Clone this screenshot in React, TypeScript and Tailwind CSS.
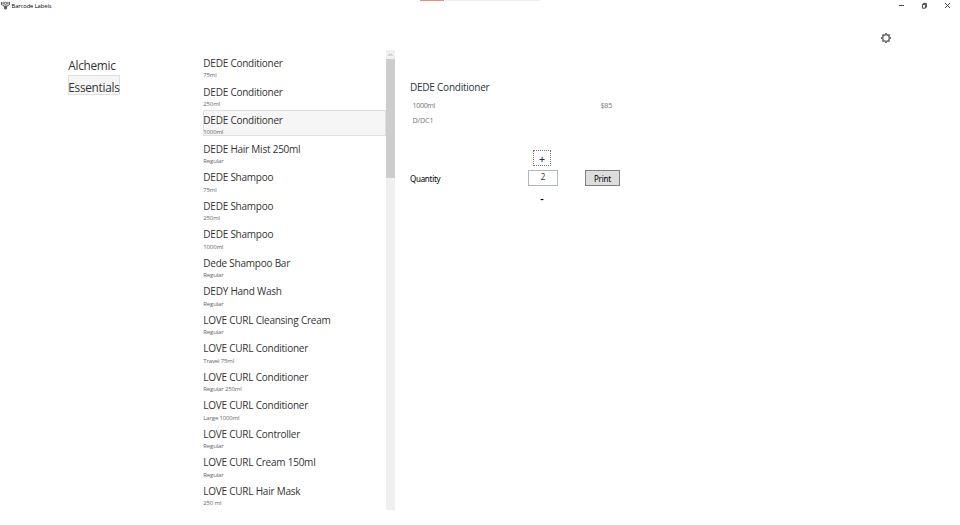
import { useState } from "react";

type Product = { name: string; variant: string };

const brands = ["Alchemic", "Essentials"];

const products: Product[] = [
  { name: "DEDE Conditioner", variant: "75ml" },
  { name: "DEDE Conditioner", variant: "250ml" },
  { name: "DEDE Conditioner", variant: "1000ml" },
  { name: "DEDE Hair Mist 250ml", variant: "Regular" },
  { name: "DEDE Shampoo", variant: "75ml" },
  { name: "DEDE Shampoo", variant: "250ml" },
  { name: "DEDE Shampoo", variant: "1000ml" },
  { name: "Dede Shampoo Bar", variant: "Regular" },
  { name: "DEDY Hand Wash", variant: "Regular" },
  { name: "LOVE CURL Cleansing Cream", variant: "Regular" },
  { name: "LOVE CURL Conditioner", variant: "Travel 75ml" },
  { name: "LOVE CURL Conditioner", variant: "Regular 250ml" },
  { name: "LOVE CURL Conditioner", variant: "Large 1000ml" },
  { name: "LOVE CURL Controller", variant: "Regular" },
  { name: "LOVE CURL Cream 150ml", variant: "Regular" },
  { name: "LOVE CURL Hair Mask", variant: "250 ml" },
];

function AppIcon() {
  return (
    <svg width="9" height="9" viewBox="0 0 9 9" fill="none" stroke="#444" strokeWidth="0.9">
      <path d="M0.6 1v3M2.1 .8v2.6M6.9 .8v2.6M8.4 1v3" />
      <circle cx="4.5" cy="2.4" r="1.2" />
      <path d="M1.4 4.4l2 .6M7.6 4.4l-2 .6M3.2 4.8l.5 3.2h1.6l.5-3.2M4.5 4.5v3" />
    </svg>
  );
}

function GearIcon() {
  const teeth = [0, 45, 90, 135, 180, 225, 270, 315];
  return (
    <svg width="10" height="10" viewBox="0 0 10 10" fill="none" stroke="#707070">
      <circle cx="5" cy="5" r="3.3" strokeWidth="1.5" />
      {teeth.map((a) => (
        <path key={a} d="M5 0v1.6" strokeWidth="1.9" transform={`rotate(${a} 5 5)`} />
      ))}
    </svg>
  );
}

function TitleBar() {
  return (
    <header className="relative flex h-[11px] items-center justify-between pr-[9px] pl-[1px]">
      <div className="flex items-center gap-[1.5px]">
        <AppIcon />
        <span className="pt-px text-[5.8px] leading-[11px] tracking-[-0.09px] text-black">Barcode Labels</span>
      </div>
      <div className="flex items-center">
        <svg width="52" height="9" viewBox="0 0 52 9" fill="none" stroke="#333" strokeWidth="0.9">
          <path d="M0 4.5h5" />
          <path d="M23.4 3.4h3v3.8h-3zM24.4 3.4v-1h3v3.8h-1" />
          <path d="M46 2l5 5M51 2l-5 5" />
        </svg>
      </div>
      <div className="absolute top-0 left-[420px] flex h-px w-[120px] gap-px">
        <div className="w-6 bg-[#ea8a80]" />
        <div className="flex-1 bg-[#ededed]" />
      </div>
    </header>
  );
}

export default function App() {
  const [selected, setSelected] = useState(2);
  const [quantity, setQuantity] = useState(2);
  const product = products[selected];

  return (
    <div className="h-[525px] w-[960px] overflow-hidden bg-white font-['Open_Sans','Noto_Sans',sans-serif] text-[#333]">
      <TitleBar />
      <div className="flex h-[39px] justify-end pt-[21.5px] pr-[69px]">
        <button className="h-[10px] w-[10px]" aria-label="Settings">
          <GearIcon />
        </button>
      </div>
      <main className="flex h-[460px]">
        <nav className="flex w-[203px] flex-col items-start gap-[2px] pt-[3px] pl-[68px]">
          {brands.map((brand) => (
            <button
              key={brand}
              className={`h-[20px] w-[52px] border text-left indent-[-0.7px] text-[11.8px] leading-[22px] tracking-[-0.28px] whitespace-nowrap ${
                brand === "Essentials" ? "border-[#e0e0e0] bg-[#f6f6f6]" : "border-transparent"
              }`}
            >
              {brand}
            </button>
          ))}
        </nav>
        <div className="flex w-[183px] flex-col gap-[2.54px] overflow-hidden pt-[3px]">
          {products.map((item, i) => (
            <button
              key={i}
              onClick={() => setSelected(i)}
              className={`flex h-[26px] w-[183px] shrink-0 flex-col border text-left indent-[-0.7px] whitespace-nowrap ${
                i === selected ? "border-[#e0e0e0] bg-[#f6f6f6]" : "border-transparent"
              }`}
            >
              <span className="h-[16.4px] text-[10px] leading-[19px] tracking-[-0.25px] [word-spacing:0.1px]">
                {item.name}
              </span>
              <span className="text-[6px] leading-[11px] tracking-[-0.15px] text-[#666]">{item.variant}</span>
            </button>
          ))}
        </div>
        <div className="w-[9px] bg-[#f0f0f0]">
          <div className="flex h-[9px] items-center justify-center">
            <svg width="5" height="4" viewBox="0 0 5 4" fill="none" stroke="#999" strokeWidth="0.8">
              <path d="M.5 3l2-2 2 2" />
            </svg>
          </div>
          <div className="h-[119px] bg-[#cdcdcd]" />
        </div>
        <section className="w-[225px] pt-[30px] pl-[15px]">
          <h1 className="text-[10px] leading-[15px] tracking-[-0.25px] text-[#1f3540] [word-spacing:0.1px]">
            {product.name}
          </h1>
          <div className="mt-[4px] flex justify-between pr-[8px] pl-[2.5px] text-[7.2px] leading-[13px] tracking-[-0.25px] text-[#777]">
            <span className="tracking-[-0.4px]">{product.variant}</span>
            <span>$85</span>
          </div>
          <p className="mt-[2px] pl-[2.5px] text-[7.2px] leading-[13px] tracking-[-0.15px] text-[#777]">D/DC1</p>
          <div className="mt-[23px] grid grid-cols-[118px_30px_27px_35px] items-center text-[8px] text-black">
            <button
              onClick={() => setQuantity(quantity + 1)}
              className="col-start-2 mb-[4px] ml-[5px] h-[16px] w-[18px] border border-dotted border-[#777] text-[10.5px] leading-[16px] font-semibold text-[#17365d]"
            >
              +
            </button>
            <span className="col-start-1 row-start-2 pt-px font-['Noto_Sans',sans-serif] text-[8px] tracking-[-0.27px]">
              Quantity
            </span>
            <div className="col-start-2 row-start-2 h-[16px] w-[30px] border border-[#b4b6bb] text-center text-[8.5px] leading-[12px] text-[#17365d]">
              {quantity}
            </div>
            <button className="col-start-4 row-start-2 h-[16px] w-[35px] border border-[#808080] bg-[#ddd] font-['Noto_Sans',sans-serif] leading-[15px] tracking-[-0.2px]">
              Print
            </button>
            <button
              onClick={() => setQuantity(Math.max(1, quantity - 1))}
              className="col-start-2 row-start-3 mt-[5px] ml-[5px] h-[16px] w-[18px] text-[11px] leading-[16px] font-semibold"
            >
              -
            </button>
          </div>
        </section>
      </main>
    </div>
  );
}
